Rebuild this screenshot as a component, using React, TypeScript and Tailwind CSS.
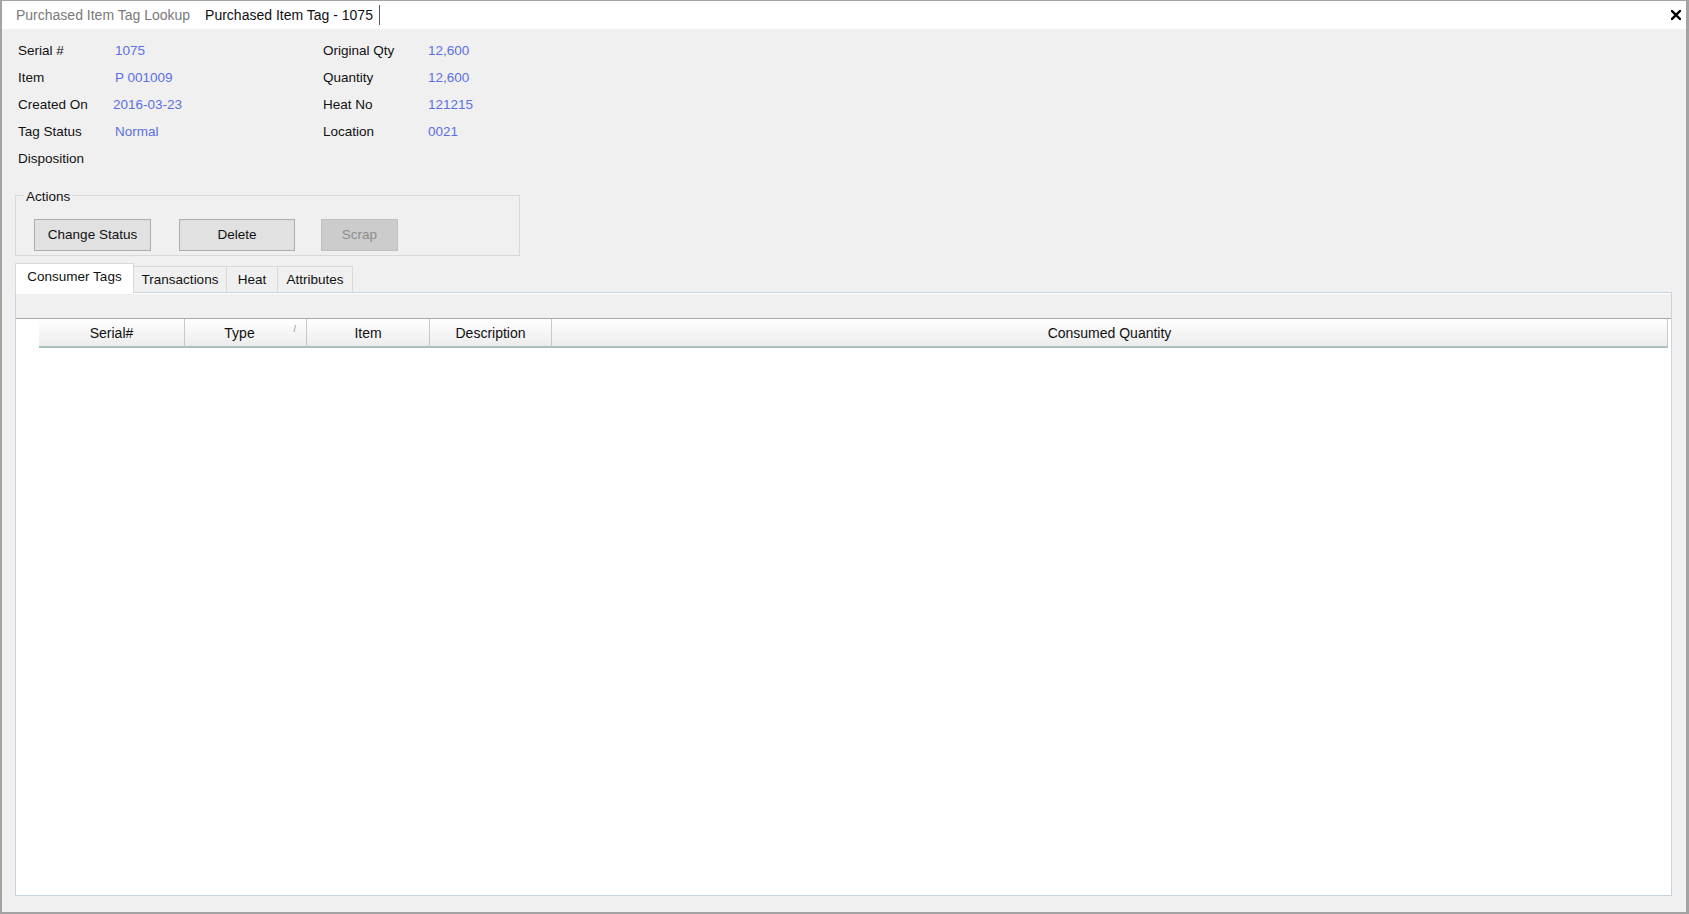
import React from 'react';

const leftInfo = [
  { label: 'Serial #', value: '1075' },
  { label: 'Item', value: 'P 001009' },
  { label: 'Created On', value: '2016-03-23' },
  { label: 'Tag Status', value: 'Normal' },
  { label: 'Disposition', value: '' },
];

const rightInfo = [
  { label: 'Original Qty', value: '12,600' },
  { label: 'Quantity', value: '12,600' },
  { label: 'Heat No', value: '121215' },
  { label: 'Location', value: '0021' },
];

const columns = [
  { name: 'Serial#', width: 'w-[146px]' },
  { name: 'Type', width: 'w-[122px] pr-[12px]', sorted: true },
  { name: 'Item', width: 'w-[123px]' },
  { name: 'Description', width: 'w-[122px]' },
];

export default function App() {
  return (
    <div className="w-[1689px] h-[914px] flex flex-col bg-[#f0f0f0] border-t border-l-2 border-r-[3px] border-b-2 border-[#a3a3a3] font-['Liberation_Sans',Arial,sans-serif] text-[13.5px] text-[#111]">
      {/* Document tabs */}
      <div className="h-[28px] shrink-0 bg-white flex items-center relative text-[14px]">
        <span className="pl-[14px] text-[#7a7a7a]">Purchased Item Tag Lookup</span>
        <span className="ml-[15px] text-[#111]">Purchased Item Tag - 1075</span>
        <span className="ml-[6px] w-px h-[20px] bg-[#555]" />
        <svg className="absolute right-[5px] top-[9px]" width="10" height="10" viewBox="0 0 10 10">
          <path d="M1 1 L9 9 M9 1 L1 9" stroke="#000" strokeWidth="2.4" strokeLinecap="square" />
        </svg>
      </div>

      {/* Tag details */}
      <div className="flex mt-[9px] pl-[16px]">
        <div className="flex flex-col">
          {leftInfo.map((r) => (
            <div key={r.label} className="h-[26.9px] flex items-center">
              <span className="w-[97px]">{r.label}</span>
              <span className={r.label === 'Created On' ? 'w-[208px] -ml-[2px] text-[#5d6fe3]' : 'w-[208px] text-[#5d6fe3]'}>{r.value}</span>
            </div>
          ))}
        </div>
        <div className="flex flex-col">
          {rightInfo.map((r) => (
            <div key={r.label} className="h-[26.9px] flex items-center">
              <span className="w-[105px]">{r.label}</span>
              <span className="text-[#5d6fe3]">{r.value}</span>
            </div>
          ))}
        </div>
      </div>

      {/* Actions group */}
      <div className="relative ml-[13px] mt-[23px] w-[505px] h-[61px] border border-[#d8d8d8]">
        <span className="absolute -top-[7px] left-[8px] px-[2px] bg-[#f0f0f0] leading-[16px]">Actions</span>
        <div className="flex pl-[18px] pt-[23px]">
          <button className="w-[117px] h-[32px] bg-[#e1e1e1] border border-[#adadad]">Change Status</button>
          <button className="ml-[28px] w-[116px] h-[32px] bg-[#e1e1e1] border border-[#adadad]">Delete</button>
          <button className="ml-[26px] w-[77px] h-[32px] bg-[#cccccc] border border-[#bfbfbf] text-[#8c8c8c]">Scrap</button>
        </div>
      </div>

      {/* Detail tabs */}
      <div className="flex items-end ml-[13px] mt-[7px] h-[29px]">
        <div className="h-[30px] w-[119px] bg-white border border-b-0 border-[#d9d9d9] flex items-center justify-center pb-[3px] relative z-10 -mb-px">
          Consumer Tags
        </div>
        <div className="h-[26px] w-[93px] bg-[#f0f0f0] border border-l-0 border-b-0 border-[#d9d9d9] flex items-center justify-center">Transactions</div>
        <div className="h-[26px] w-[51px] bg-[#f0f0f0] border border-l-0 border-b-0 border-[#d9d9d9] flex items-center justify-center">Heat</div>
        <div className="h-[26px] w-[75px] bg-[#f0f0f0] border border-l-0 border-b-0 border-[#d9d9d9] flex items-center justify-center">Attributes</div>
      </div>

      {/* Tab page */}
      <div className="flex-1 ml-[13px] mr-[14px] mb-[16px] border border-[#c8d4df] bg-white flex flex-col">
        <div className="h-[26px] shrink-0 bg-[#f0f0f0] border-t border-white border-b border-b-[#a8a8a8]" />
        <div className="flex h-[29px] shrink-0 mr-[3px]">
          <div className="w-[23px] bg-white" />
          {columns.map((c) => (
            <div
              key={c.name}
              className={`${c.width} relative flex items-center justify-center pt-[2px] bg-gradient-to-b from-white to-[#ececec] border-r border-[#c2caca] border-b-2 border-b-[#a9c0c0] text-[14px]`}
            >
              {c.name}
              {c.sorted && <span className="absolute right-[10px] top-[4px] text-[9px] text-[#888]">/</span>}
            </div>
          ))}
          <div className="flex-1 flex items-center justify-center pt-[2px] bg-gradient-to-b from-white to-[#ececec] border-r border-[#c2caca] border-b-2 border-b-[#a9c0c0] text-[14px]">
            Consumed Quantity
          </div>
        </div>
        <div className="flex-1 bg-white" />
      </div>
    </div>
  );
}
